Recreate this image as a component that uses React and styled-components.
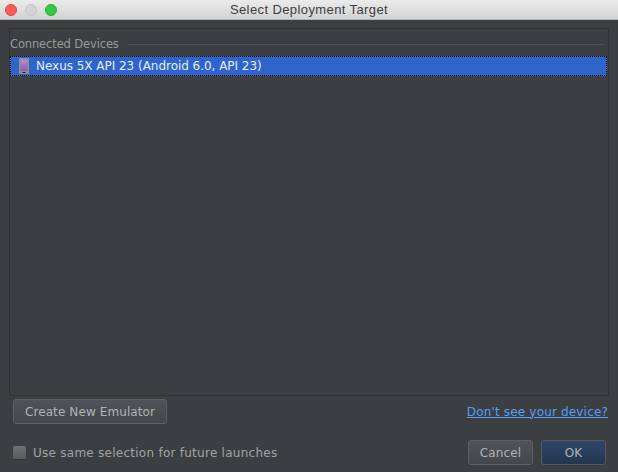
import * as React from 'react';
import styled, { createGlobalStyle } from 'styled-components';

const uiFont = '"DejaVu Sans", sans-serif';

const GlobalStyle = createGlobalStyle`
  html, body {
    margin: 0;
    padding: 0;
    background: #3c3f41;
  }
`;

const Root = styled.div`
  width: 618px;
  height: 472px;
  display: flex;
  flex-direction: column;
  overflow: hidden;
  background: #3c3f41;
  font-family: ${uiFont};
  font-size: 12px;
  color: #bbbbbb;
`;

const TitleBar = styled.div`
  height: 19px;
  flex: none;
  display: flex;
  align-items: center;
  gap: 8px;
  padding-left: 5px;
  position: relative;
  background: linear-gradient(#ebebeb, #d3d3d3);
  border-bottom: 1px solid #b4b4b4;
`;

const Light = styled.span`
  width: 12px;
  height: 12px;
  border-radius: 50%;
  background: ${({ color }) => color};
  border: 0.5px solid ${({ edge }) => edge};
  box-sizing: border-box;
`;

const Title = styled.div`
  position: absolute;
  left: 0;
  right: 0;
  text-align: center;
  font: 13px "Liberation Sans", Arial, sans-serif;
  letter-spacing: 0.4px;
  color: #3e3e3e;
`;

const Body = styled.div`
  flex: 1;
  display: flex;
  flex-direction: column;
  padding: 8px 9px 0;
  min-height: 0;
`;

const Panel = styled.div`
  height: 368px;
  flex: none;
  box-sizing: border-box;
  border: 1px solid #323232;
  display: flex;
  flex-direction: column;
`;

const GroupHeader = styled.div`
  height: 27px;
  flex: none;
  display: flex;
  align-items: center;
  gap: 8px;
  padding-top: 3px;
  box-sizing: border-box;
  color: #999999;
  font-size: 11.5px;
  letter-spacing: -0.13px;
`;

const HeaderRule = styled.div`
  flex: 1;
  height: 1px;
  margin-right: 4px;
  background: #4c4f51;
`;

const DeviceRow = styled.div`
  height: 20px;
  box-sizing: border-box;
  display: flex;
  align-items: center;
  gap: 6px;
  padding-left: 9px;
  margin-right: 1px;
  background: #2f65ca;
  outline: 1px dotted #0b0b0b;
  outline-offset: -1px;
  color: #e6ecf8;
  letter-spacing: -0.03px;
`;

const ActionRow = styled.div`
  display: flex;
  align-items: center;
  justify-content: space-between;
  margin-top: 3px;
  padding: 0 1px 0 4px;
`;

const FooterRow = styled.div`
  display: flex;
  align-items: center;
  justify-content: space-between;
  margin-top: 16px;
  padding: 0 3px 0 4px;
`;

const Button = styled.button`
  height: 25px;
  width: ${({ w }) => w}px;
  padding: 0;
  box-sizing: border-box;
  border-radius: 3px;
  border: 1px solid ${({ primary }) => (primary ? '#555a5f' : '#5e6060')};
  background: ${({ primary }) =>
    primary
      ? 'linear-gradient(#2e4566, #233650)'
      : 'linear-gradient(#50545a, #434749)'};
  color: #b0b3b5;
  font-family: ${uiFont};
  font-size: 12px;
  letter-spacing: 0.1px;
`;

const Link = styled.a`
  color: #589df6;
  text-decoration: underline;
  font-size: 12px;
  letter-spacing: 0.17px;
`;

const CheckLabel = styled.label`
  display: flex;
  align-items: center;
  gap: 7px;
  color: #a0a2a4;
  letter-spacing: 0.26px;
`;

const CheckBox = styled.span`
  width: 13px;
  height: 14px;
  box-sizing: border-box;
  border-radius: 2px;
  background: linear-gradient(#707072, #5a5b5d);
  border-bottom: 1px solid #333;
`;

const Buttons = styled.div`
  display: flex;
  gap: 8px;
`;

const PhoneIcon = () => (
  <svg width="11" height="16" viewBox="0 0 11 16" style={{ flex: 'none' }}>
    <defs>
      <linearGradient id="screen" x1="0" y1="0" x2="0" y2="1">
        <stop offset="0" stopColor="#b58bd0" />
        <stop offset="1" stopColor="#8a5ea8" />
      </linearGradient>
    </defs>
    <rect x="0" y="0" width="10" height="16" rx="1" fill="#8f9092" />
    <rect x="1.5" y="2" width="7" height="11" fill="url(#screen)" />
    <rect x="3.5" y="14" width="3" height="1" fill="#1e1e1e" />
  </svg>
);

const App = () => (
  <Root>
    <GlobalStyle />
    <TitleBar>
      <Light color="#fc5b57" edge="#e2463f" />
      <Light color="#d3d3d3" edge="#c4c4c4" />
      <Light color="#34c748" edge="#2dac2f" />
      <Title>Select Deployment Target</Title>
    </TitleBar>
    <Body>
      <Panel>
        <GroupHeader>
          Connected Devices
          <HeaderRule />
        </GroupHeader>
        <DeviceRow>
          <PhoneIcon />
          Nexus 5X API 23 (Android 6.0, API 23)
        </DeviceRow>
      </Panel>
      <ActionRow>
        <Button w={154}>Create New Emulator</Button>
        <Link>Don't see your device?</Link>
      </ActionRow>
      <FooterRow>
        <CheckLabel>
          <CheckBox />
          Use same selection for future launches
        </CheckLabel>
        <Buttons>
          <Button w={65}>Cancel</Button>
          <Button w={65} primary>OK</Button>
        </Buttons>
      </FooterRow>
    </Body>
  </Root>
);

export default App;
